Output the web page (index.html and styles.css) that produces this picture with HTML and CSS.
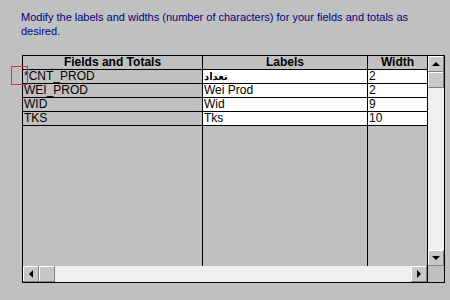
FILE: index.html
```html
<!DOCTYPE html>
<html lang="en">
<head>
    <meta charset="UTF-8">
    <meta name="viewport" content="width=device-width, initial-scale=1.0">
    <title>Field Labels</title>
    <link rel="stylesheet" href="styles.css">
</head>
<body>
    <p class="intro">Modify the labels and widths (number of characters) for your fields and totals as desired.</p>

    <div class="frame">
        <div class="main">
            <div class="grid">
                <div class="col col-fields">
                    <div class="head">Fields and Totals</div>
                    <div class="cell">*CNT_PROD</div>
                    <div class="cell">WEI_PROD</div>
                    <div class="cell">WID</div>
                    <div class="cell">TKS</div>
                </div>
                <div class="col col-labels">
                    <div class="head">Labels</div>
                    <div class="cell edit"><span class="arabic">تعداد</span></div>
                    <div class="cell edit">Wei Prod</div>
                    <div class="cell edit">Wid</div>
                    <div class="cell edit">Tks</div>
                </div>
                <div class="col col-width">
                    <div class="head">Width</div>
                    <div class="cell edit">2</div>
                    <div class="cell edit">2</div>
                    <div class="cell edit">9</div>
                    <div class="cell edit">10</div>
                </div>
            </div>
            <!-- horizontal scrollbar -->
            <div class="hscroll">
                <div class="btn"><span class="arrow left"></span></div>
                <div class="btn thumb"></div>
                <div class="track"></div>
                <div class="btn"><span class="arrow right"></span></div>
            </div>
        </div>
        <!-- vertical scrollbar -->
        <div class="side">
            <div class="vscroll">
                <div class="btn"><span class="arrow up"></span></div>
                <div class="btn thumb"></div>
                <div class="track"></div>
                <div class="btn"><span class="arrow down"></span></div>
            </div>
            <div class="corner"></div>
        </div>
    </div>

    <div class="marker"></div>
</body>
</html>
```

FILE: styles.css
```css
body {
    margin: 0;
    padding: 10px 0 0 21px;
    background: #c0c0c0;
    font-family: "Liberation Sans", Arial, sans-serif;
    font-size: 11px;
    color: #000;
    width: 429px;
    height: 290px;
}

.intro {
    margin: 0;
    width: 400px;
    line-height: 14px;
    color: #000080;
}

.frame {
    display: flex;
    margin: 17px 0 0 1px;
    width: 421px;
    height: 226px;
    border: 1px solid #000;
}

.main {
    display: flex;
    flex-direction: column;
    width: 404px;
    border-right: 1px solid #000;
}

.grid {
    display: flex;
    flex: 1;
}

.col {
    display: flex;
    flex-direction: column;
    border-right: 1px solid #000;
}

.col-fields {
    width: 179px;
}

.col-labels {
    width: 164px;
}

.col-width {
    flex: 1;
    border-right: none;
}

.head {
    height: 13px;
    line-height: 13px;
    border-bottom: 1px solid #000;
    text-align: center;
    font-weight: bold;
    font-size: 12px;
}

.cell {
    height: 13px;
    line-height: 13px;
    border-bottom: 1px solid #000;
    padding-left: 1px;
    font-size: 12px;
    white-space: nowrap;
}

.cell.edit {
    background: #fff;
}

.arabic {
    font-family: "DejaVu Sans", sans-serif;
    font-size: 10px;
    font-weight: bold;
}

/* scrollbars */
.hscroll {
    display: flex;
    height: 16px;
}

.side {
    display: flex;
    flex-direction: column;
    width: 16px;
}

.vscroll {
    display: flex;
    flex-direction: column;
    flex: 1;
}

.corner {
    height: 16px;
    background: #c0c0c0;
}

.btn {
    width: 16px;
    height: 16px;
    flex-shrink: 0;
    background: #c8c8c8;
    box-shadow: inset -1px -1px #808080, inset 1px 1px #fff;
    display: flex;
    align-items: center;
    justify-content: center;
}

.track {
    flex: 1;
    background: #efefef;
}

.arrow {
    width: 0;
    height: 0;
    border: 4px solid transparent;
}

.arrow.up {
    border-bottom-color: #000;
    border-top-width: 0;
    margin-top: -1px;
}

.arrow.down {
    border-top-color: #000;
    border-bottom-width: 0;
}

.arrow.left {
    border-right-color: #000;
    border-left-width: 0;
}

.arrow.right {
    border-left-color: #000;
    border-right-width: 0;
}

.marker {
    position: absolute;
    left: 11px;
    top: 66px;
    width: 15px;
    height: 17px;
    border: 1px solid #d83838;
}
```
